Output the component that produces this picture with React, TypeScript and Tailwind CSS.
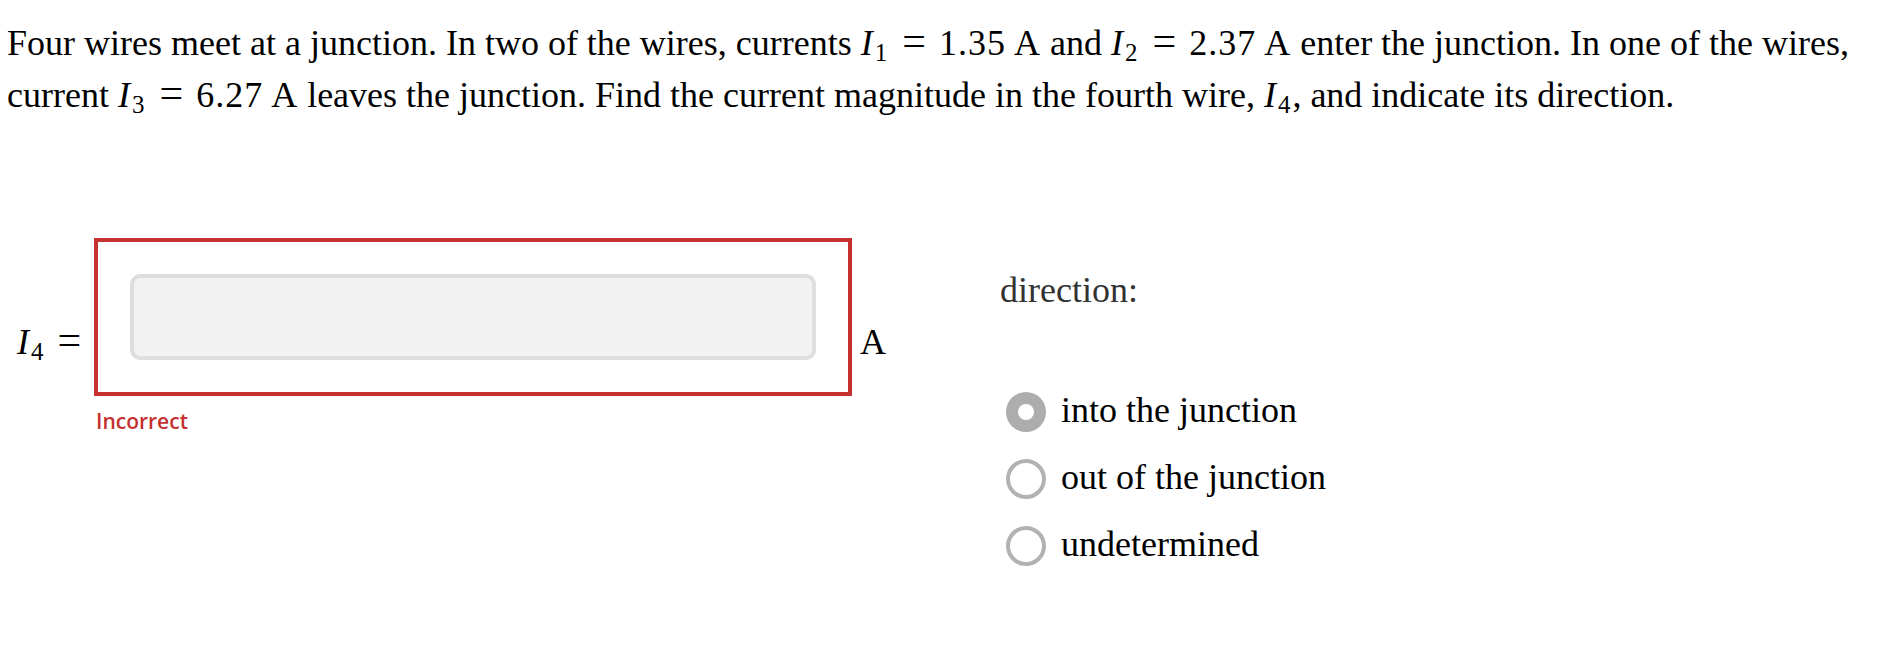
import React, { useState } from "react";

// math symbol like I_1, set in italic with a dropped subscript
function Sym({ sub }: { sub: string }) {
  return (
    <span className="whitespace-nowrap">
      <i>I</i>
      <span className="ml-[2px] mr-[2px] text-[25px] leading-none align-[-6px]">{sub}</span>
    </span>
  );
}

function Eq({ className = "mx-[13px]" }: { className?: string }) {
  return <span className={className + " text-[42px] leading-none"}>=</span>;
}

// value with unit, math fonts run a touch wider than text
function Val({ v }: { v: string }) {
  return <span className="tracking-[1px] whitespace-nowrap">{v} A</span>;
}

const OPTIONS = ["into the junction", "out of the junction", "undetermined"];

function Radio({ checked }: { checked: boolean }) {
  if (checked) {
    return (
      <span className="flex h-[40px] w-[40px] shrink-0 items-center justify-center rounded-full bg-[#adadad]">
        <span className="h-[16px] w-[16px] rounded-full bg-white" />
      </span>
    );
  }
  return <span className="h-[40px] w-[40px] shrink-0 rounded-full border-4 border-[#b2b2b2] bg-white" />;
}

export default function App() {
  const [choice, setChoice] = useState(0);
  const [value, setValue] = useState("");

  return (
    <div className="h-[666px] w-[1892px] overflow-hidden bg-white pl-[7px] pt-[17px] font-['Liberation_Serif','Times_New_Roman',serif] text-[36px] text-black">
      {/* question */}
      <div className="leading-[52px]">
        <div className="whitespace-nowrap">
          Four wires meet at a junction. In two of the wires, currents <Sym sub="1" />
          <Eq />
          <Val v="1.35" /> and <Sym sub="2" />
          <Eq />
          <Val v="2.37" /> enter the junction. In one of the wires,
        </div>
        <div className="whitespace-nowrap">
          current <Sym sub="3" />
          <Eq />
          <Val v="6.27" /> leaves the junction. Find the current magnitude in the fourth wire, <Sym sub="4" />, and
          indicate its direction.
        </div>
      </div>

      <div className="mt-[117px] flex items-start">
        {/* answer box */}
        <div className="flex w-[993px] items-start">
          <div className="mt-[78px] w-[87px] pl-[10px] leading-[52px] whitespace-nowrap">
            <Sym sub="4" />
            <Eq className="ml-[12px]" />
          </div>
          <div className="flex flex-col">
            <div className="border-4 border-[#c53030] p-[32px]">
              <input
                value={value}
                onChange={(e) => setValue(e.target.value)}
                className="block h-[86px] w-[686px] rounded-[10px] border-4 border-[#dedede] bg-[#f2f2f2] px-4 text-[32px] outline-none"
              />
            </div>
            <div className="mt-[11px] ml-[2px] font-['Open_Sans',sans-serif] text-[21px] leading-[28px] font-semibold text-[#c53030]">
              Incorrect
            </div>
          </div>
          <div className="mt-[78px] ml-[8px] leading-[52px]">A</div>
        </div>

        {/* direction */}
        <div className="flex flex-col">
          <div className="mt-[26px] leading-[52px] text-[#333333]">direction:</div>
          <div className="mt-[62px] flex flex-col">
            {OPTIONS.map((opt, i) => (
              <label
                key={opt}
                onClick={() => setChoice(i)}
                className="flex h-[67px] cursor-pointer items-center gap-[15px] pl-[6px]"
              >
                <Radio checked={choice === i} />
                <span className="mb-[4px] leading-[44px] whitespace-nowrap">{opt}</span>
              </label>
            ))}
          </div>
        </div>
      </div>
    </div>
  );
}
